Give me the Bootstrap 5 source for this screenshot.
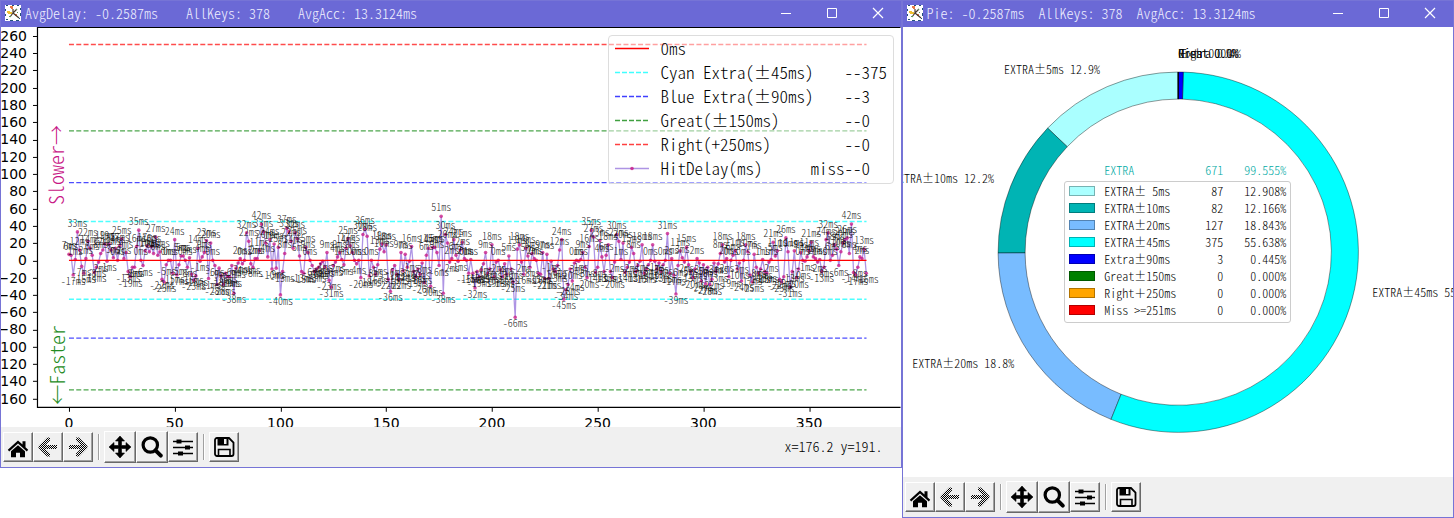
<!DOCTYPE html>
<html lang="en">
<head>
<meta charset="utf-8">
<meta name="viewport" content="width=device-width, initial-scale=1">
<title>AvgDelay: -0.2587ms</title>
<link href="https://cdn.jsdelivr.net/npm/bootstrap@5.3.0/dist/css/bootstrap.min.css" rel="stylesheet">
<style>
  body { font-family: "Noto Sans CJK JP", "Liberation Mono", monospace; font-size: 14px; font-weight: 300; font-feature-settings: "hwid"; color: #000; background: #fff; }
  .full { font-feature-settings: "fwid"; }
  .win { border: 1px solid #7674d6; min-width: 0; }
  .win-delay { flex: 902 1 0; }
  .win-pie { flex: 552 1 0; }
  .titlebar { height: 26px; background: #6b69d6; color: #f0f0ff; }
  .titlebar h1 { font-size: 14px; line-height: 24px; font-weight: 300; white-space: pre; padding-bottom: 2px; }
  .ctl { width: 46px; height: 24px; }
  .figure-area svg { display: block; width: 100%; height: auto; }
  .toolbar { height: 40px; background: #f0f0f0; padding: 0 2px; }
  .tool { width: 30px; height: 30px; background: #f0f0f0; border: 1px solid; border-color: #fff #696969 #696969 #fff; box-shadow: inset -1px -1px #a0a0a0; color: #000; }
  .tool-lg { width: 32px; height: 32px; }
  .sep { width: 2px; height: 26px; margin: 0 4px 0 5px; border-left: 1px solid #a0a0a0; border-right: 1px solid #fff; }
  .coords { padding-right: 16px; white-space: pre; }
  .tick { font: 14px "DejaVu Sans", sans-serif; font-feature-settings: normal; }
  .hit-label { font-size: 10px; fill: #000; fill-opacity: .9; text-anchor: middle; }
  .side-label { font-size: 20px; }
  .wedge-label { font-size: 12px; }
  .line-legend { top: 8px; right: 7px; width: 286px; padding: 0 6px 3px; background: rgba(255,255,255,.47); border: 1px solid #ddd; border-radius: 4px; font-size: 17px; line-height: 24px; white-space: nowrap; }
  .line-legend svg { width: 34px; height: 24px; margin-right: 12px; }
  .line-legend .count { width: 42px; }
  .pie-legend { width: 227px; padding: 0 4px 4px; border: 1px solid #ccc; border-radius: 3px; background: #fff; font-size: 12px; }
  .pie-legend table { width: 100%; table-layout: fixed; line-height: 17px; }
  .pie-legend th, .pie-legend td { padding: 0; }
  .pie-legend th { font-weight: 300; white-space: pre; }
  .pie-legend td { text-align: right; }
  .c-swatch { width: 35px; } .c-name { width: 83px; } .c-count { width: 36px; }
  .swatch { display: block; width: 26px; height: 10px; border: 1px solid rgba(0,0,0,.3); }
  .pie-total { left: 4px; right: 4px; color: #00aaa4; }
</style>
</head>
<body>
<svg width="0" height="0" class="position-absolute" aria-hidden="true">
  <defs>
    <pattern id="dither" width="2" height="2" patternUnits="userSpaceOnUse"><path d="M0 0h1v1H0zM1 1h1v1H1z" shape-rendering="crispEdges"/></pattern>
    <symbol id="i-app" viewBox="0 0 16 16">
      <path fill="#fff" d="M0 0h16v16H0z"/>
      <path fill="#24527a" d="M1 0h2v1H1zM7 0h2v1H7zM12 0h2v1h-2zM0 4h1v2H0zM15 3h1v2h-1zM0 9h1v2H0zM15 8h1v3h-1zM1 14h2v1H1zM5 15h3v1H5zM11 15h3v1h-3zM14 13h1v1h-1z"/>
      <path fill="#e87a45" d="M5 1h3v3H6V3H5zM10 9h2v2h-2z"/><path fill="#f0c030" d="M2 6h3v1h2v2H3V8H2z"/>
      <path stroke="#4a3a2c" stroke-width="1.200" d="M8 4v4l4-4M8 8l-3 4M8 8l6 5" fill="none"/>
      <path fill="#5a9a55" d="M11 4h1v1h-1zM4 11h2v1H4zM12 7h1v1h-1z"/>
    </symbol>
    <symbol id="i-min" viewBox="0 0 12 12"><path d="M1 6.500h10" stroke="#fff"/></symbol>
    <symbol id="i-max" viewBox="0 0 12 12"><path d="M1.500 1.500h9v9h-9z" fill="none" stroke="#fff"/></symbol>
    <symbol id="i-close" viewBox="0 0 12 12"><path d="M1 1l10 10M11 1L1 11" stroke="#fff" stroke-width="1.200"/></symbol>
    <symbol id="i-home" viewBox="0 0 24 24"><path d="M1.800 14.800 12 5.500l4.500 4V6.200h3v6l2.700 2.600-1.400 1.600L12 8.600l-8.800 7.800z"/><path d="M5 16.300 12 10.200l7 6.100v6h-5v-4.600h-4v4.600H5z"/></symbol>
    <symbol id="i-back" viewBox="0 0 24 24"><path d="M11 2.500h3v3L9.500 10H21v4H9.500l4.500 4.500v3h-3L2.500 13v-2z" fill="url(#dither)"/></symbol>
    <symbol id="i-next" viewBox="0 0 24 24"><path d="M13 2.500h-3v3l4.500 4.500H3v4h11.500L10 18.500v3h3l8.500-8.500v-2z" fill="url(#dither)"/></symbol>
    <symbol id="i-pan" viewBox="0 0 24 24"><path d="M12 1l4.500 5h-3v4.500H18v-3l5 4.500-5 4.500v-3h-4.500V18h3L12 23l-4.500-5h3v-4.500H6v3L1 12l5-4.500v3h4.500V6h-3z" stroke="#000" stroke-width=".6" stroke-linejoin="round"/></symbol>
    <symbol id="i-zoom" viewBox="0 0 24 24"><circle cx="10.300" cy="10" r="7.200" fill="none" stroke="#000" stroke-width="3.200"/><path d="M15.500 15.300l5.300 5.300" stroke="#000" stroke-width="4" stroke-linecap="round"/></symbol>
    <symbol id="i-conf" viewBox="0 0 24 24"><path d="M2 6.500h20M2 12.500h20M2 18.500h20" stroke="#000" stroke-width="1.600"/><path d="M5.500 4.500h5v4h-5zM14 10.500h5v4h-5zM7 16.500h5v4H7z"/></symbol>
    <symbol id="i-save" viewBox="0 0 24 24"><path d="M5 3h12l4.500 4.500V19a2 2 0 0 1-2 2H5a2 2 0 0 1-2-2V5a2 2 0 0 1 2-2z" fill="none" stroke="#000" stroke-width="1.800"/><path d="M5.500 3h11v7.500h-11zm6.500 1v5h2.500V4z" fill-rule="evenodd"/><path d="M6.500 21v-6.500h11.500V21" fill="none" stroke="#000" stroke-width="1.600"/></symbol>
  </defs>
</svg>

<main class="d-flex align-items-start">
  <section class="win win-delay">
    <header class="titlebar d-flex align-items-start">
      <svg class="m-1 flex-shrink-0" width="16" height="16"><use href="#i-app"/></svg>
      <h1 class="m-0 flex-grow-1 overflow-hidden">AvgDelay: -0.2587ms    AllKeys: 378    AvgAcc: 13.3124ms</h1>
      <button class="btn ctl p-0 border-0 rounded-0 d-flex align-items-center justify-content-center" aria-label="Minimize"><svg width="12" height="12"><use href="#i-min"/></svg></button>
      <button class="btn ctl p-0 border-0 rounded-0 d-flex align-items-center justify-content-center" aria-label="Maximize"><svg width="12" height="12"><use href="#i-max"/></svg></button>
      <button class="btn ctl p-0 border-0 rounded-0 d-flex align-items-center justify-content-center" aria-label="Close"><svg width="12" height="12"><use href="#i-close"/></svg></button>
    </header>
    <div class="figure-area position-relative">
      <svg id="delay" viewBox="0 0 900 400" role="img" aria-label="Hit delay by key"></svg>
      <div class="line-legend position-absolute" id="lineLegend"></div>
    </div>
    <footer class="toolbar d-flex align-items-center">
      <div class="tools d-flex align-items-center"></div>
      <output class="coords ms-auto">x=176.2 y=191.</output>
    </footer>
  </section>

  <section class="win win-pie">
    <header class="titlebar d-flex align-items-start">
      <svg class="m-1 flex-shrink-0" width="16" height="16"><use href="#i-app"/></svg>
      <h1 class="m-0 flex-grow-1 overflow-hidden">Pie: -0.2587ms  AllKeys: 378  AvgAcc: 13.3124ms</h1>
      <button class="btn ctl p-0 border-0 rounded-0 d-flex align-items-center justify-content-center" aria-label="Minimize"><svg width="12" height="12"><use href="#i-min"/></svg></button>
      <button class="btn ctl p-0 border-0 rounded-0 d-flex align-items-center justify-content-center" aria-label="Maximize"><svg width="12" height="12"><use href="#i-max"/></svg></button>
      <button class="btn ctl p-0 border-0 rounded-0 d-flex align-items-center justify-content-center" aria-label="Close"><svg width="12" height="12"><use href="#i-close"/></svg></button>
    </header>
    <div class="figure-area position-relative">
      <svg id="pie" viewBox="0 0 550 450" role="img" aria-label="Share of keys by accuracy"></svg>
      <div class="position-absolute top-0 start-0 w-100 h-100 d-flex align-items-center justify-content-center">
        <div class="pie-legend position-relative">
          <div class="pie-total position-absolute bottom-100 pb-1">
            <table><colgroup><col class="c-swatch"><col class="c-name"><col class="c-count"><col></colgroup>
              <tbody><tr><td></td><th scope="row">EXTRA</th><td>671</td><td>99.555%</td></tr></tbody></table>
          </div>
          <table><colgroup><col class="c-swatch"><col class="c-name"><col class="c-count"><col></colgroup>
            <tbody id="pieRows"></tbody></table>
        </div>
      </div>
    </div>
    <footer class="toolbar d-flex align-items-center">
      <div class="tools d-flex align-items-center"></div>
    </footer>
  </section>
</main>

<script src="https://cdn.jsdelivr.net/npm/bootstrap@5.3.0/dist/js/bootstrap.bundle.min.js"></script>
<script>
const delays = [7,6,-17,1,33,12,-7,-15,2,22,14,6,-14,-8,-2,8,12,19,-1,19,12,3,14,0,17,25,2,9,-13,-19,-8,-8,16,35,0,-6,11,17,10,16,
8,27,6,10,-22,-25,-5,0,0,-15,24,-17,-5,5,5,0,-8,3,-16,-23,-18,14,-1,4,9,23,-21,20,0,-6,-28,-9,-18,-28,-15,-19,-19,-6,-38,-9,
-3,2,-4,0,32,22,-4,-8,2,2,11,42,33,20,4,24,-10,19,-9,15,-40,-13,8,37,33,22,14,32,25,5,-13,-15,15,9,0,-6,-13,-10,-8,-4,
-1,-8,9,-23,-31,-6,-2,4,9,1,-5,14,25,17,9,0,-4,0,-20,30,36,28,-18,0,-8,-16,-5,13,19,10,18,-22,-36,-11,-6,-16,-22,9,-12,7,
-8,-1,16,-13,-19,-10,-16,-3,-26,6,14,-30,15,15,9,-6,51,-38,30,20,-2,2,24,6,-1,12,21,2,0,-15,1,-15,-32,-13,-19,-11,-4,9,-15,-10,
18,-19,-2,0,-11,-19,-4,-16,5,-10,-25,-66,13,18,-2,-16,14,5,-8,8,2,0,-15,-16,9,-21,7,-21,-1,-10,-13,-6,12,24,-45,-34,-28,-10,-24,-3,
0,-1,1,9,-8,-20,16,35,27,-14,-8,23,4,-13,6,18,-13,-20,-2,30,22,1,20,-14,-8,-2,15,8,-13,-6,-1,18,-15,-10,-5,0,18,-1,-10,-3,
-13,-5,0,31,-15,2,-17,-39,-6,11,3,-2,15,-5,-13,-20,-10,2,-3,-24,-5,-27,-8,-28,-22,-3,-13,-4,8,18,-2,2,-19,0,6,11,-10,-3,-24,0,
18,10,-17,-25,7,-8,-15,-10,1,-13,-15,-2,1,21,5,11,-22,-25,-19,26,10,-31,-13,11,-20,-10,9,0,-1,4,11,21,4,2,-2,1,-13,-8,24,32,
0,6,18,13,-6,10,20,24,26,8,42,-14,-17,-8,4,2,13,-15];

const px = i => 68 + i * 2.116, py = v => 233.5 - v * .864;
const wide = s => s.replace(/±|＋/g, '<tspan class="full">$&</tspan>');
const wideHtml = s => s.replace(/±|＋/g, '<span class="full">$&</span>');

/* hit delay chart */
let g = '';
[[45,'#00ffff'],[-45,'#00ffff'],[90,'#0000ff'],[-90,'#0000ff'],[150,'#008000'],[-150,'#008000'],[250,'#ff0000']].forEach(([v, c]) => {
  g += `<path d="M68 ${py(v)}H866" stroke="${c}" stroke-opacity=".7" stroke-width="1.400" stroke-dasharray="5 2.300"/>`;
});
g += `<polyline fill="none" stroke="#9370db" stroke-opacity=".75" stroke-width="1.300" points="${delays.map((v, i) => px(i) + ',' + py(v)).join(' ')}"/>`;
delays.forEach((v, i) => { g += `<circle cx="${px(i)}" cy="${py(v)}" r="1.800" fill="#c71585" fill-opacity=".75"/>`; });
g += `<path d="M68 ${py(0)}H866" stroke="red" stroke-width="1.400"/>`;
delays.forEach((v, i) => { g += `<text class="hit-label" x="${px(i)}" y="${py(v) + (v < 0 ? 10 : -5)}">${v}ms</text>`; });
g += '<path d="M36.500 0V380.500H900M36.500 .500H900" fill="none" stroke="#000" stroke-width="1.200"/>';
for (let v = -160; v <= 260; v += 20) {
  g += `<path d="M32 ${Math.round(py(v)) + .5}h4" stroke="#000"/><text class="tick" text-anchor="end" x="26" y="${py(v) + 5}">${v < 0 ? '−' + -v : v}</text>`;
}
for (let v = 0; v <= 350; v += 50) {
  g += `<path d="M${Math.round(px(v)) + .5} 381v4" stroke="#000"/><text class="tick" text-anchor="middle" x="${px(v)}" y="401">${v}</text>`;
}
g += '<text class="side-label" fill="#c71585" transform="translate(63 178) rotate(-90)">Slower<tspan class="full">→</tspan></text>';
g += '<text class="side-label" fill="#228b22" transform="translate(64 378) rotate(-90)"><tspan class="full">←</tspan>Faster</text>';
document.getElementById('delay').innerHTML = g;

document.getElementById('lineLegend').innerHTML = [
  ['0ms', '', '', '#ff0000', ''], ['Cyan Extra(±45ms)', '', '--375', '#00ffff', '5 2'], ['Blue Extra(±90ms)', '', '--3', '#0000ff', '5 2'],
  ['Great(±150ms)', '', '--0', '#008000', '5 2'], ['Right(+250ms)', '', '--0', '#ff0000', '5 2'], ['HitDelay(ms)', 'miss', '--0', '#9370db', '']
].map(([n, p, c, col, dash]) => `<div class="d-flex"><svg viewBox="0 0 34 24" aria-hidden="true"><path d="M0 12.500h34" stroke="${col}" stroke-width="1.400" stroke-opacity="${n === '0ms' ? 1 : .75}" stroke-dasharray="${dash}"/>${p ? '<circle cx="17" cy="12.500" r="1.800" fill="#c71585" fill-opacity=".8"/>' : ''}</svg><span class="me-auto">${wideHtml(n)}</span><span>${p}</span><span class="count">${c}</span></div>`).join('');

/* pie */
const parts = [['EXTRA± 5ms',87,'12.908%','#aaffff','EXTRA±5ms 12.9%'],['EXTRA±10ms',82,'12.166%','#00b4b4','EXTRA±10ms 12.2%'],
  ['EXTRA±20ms',127,'18.843%','#78bcff','EXTRA±20ms 18.8%'],['EXTRA±45ms',375,'55.638%','#00ffff','EXTRA±45ms 55.6%'],
  ['Extra±90ms',3,'0.445%','#0000ff','Extra 0.4%'],['Great±150ms',0,'0.000%','#008000','Great 0.0%'],
  ['Right＋250ms',0,'0.000%','#ffa500','Right 0.0%'],['Miss >=251ms',0,'0.000%','#ff0000','Miss 0.0%']];
const pt = (r, f) => (275 - r * Math.sin(f * 2 * Math.PI)).toFixed(2) + ' ' + (225 - r * Math.cos(f * 2 * Math.PI)).toFixed(2);
let acc = 0, w = '', labels = '';
parts.forEach(([, n, , col, label]) => {
  const a = acc / 674, b = (acc + n) / 674, big = b - a > .5 ? 1 : 0, mid = (a + b) / 2;
  w += `<path d="M${pt(180, a)}A180 180 0 ${big} 0 ${pt(180, b)}L${pt(153, b)}A153 153 0 ${big} 1 ${pt(153, a)}Z" fill="${col}" stroke="#000" stroke-opacity=".5" stroke-width=".8"/>`;
  const [x, y] = pt(198, mid).split(' ').map(Number);
  labels += `<text class="wedge-label" x="${x}" y="${y + 4}" text-anchor="${x < 274 ? 'end' : 'start'}">${wide(label)}</text>`;
  acc += n;
});
document.getElementById('pie').innerHTML = w + labels;
document.getElementById('pieRows').innerHTML = parts.map(([n, c, p, col]) =>
  `<tr><td><span class="swatch" style="background:${col}"></span></td><th scope="row">${wideHtml(n.replace('>', '&gt;'))}</th><td>${c}</td><td>${p}</td></tr>`).join('');

/* the same navigation toolbar under both figures */
const tool = (name, icon, lg) => `<button class="btn tool ${lg ? 'tool-lg' : ''} p-0 rounded-0 d-flex align-items-center justify-content-center" aria-label="${name}"><svg width="24" height="24"><use href="#i-${icon}"/></svg></button>`;
document.querySelectorAll('.tools').forEach(t => {
  t.innerHTML = tool('Home', 'home') + tool('Back', 'back') + tool('Forward', 'next') + '<div class="sep"></div>' +
    tool('Pan', 'pan', 1) + tool('Zoom', 'zoom', 1) + tool('Configure subplots', 'conf') + '<div class="sep"></div>' + tool('Save', 'save');
});
</script>
</body>
</html>
